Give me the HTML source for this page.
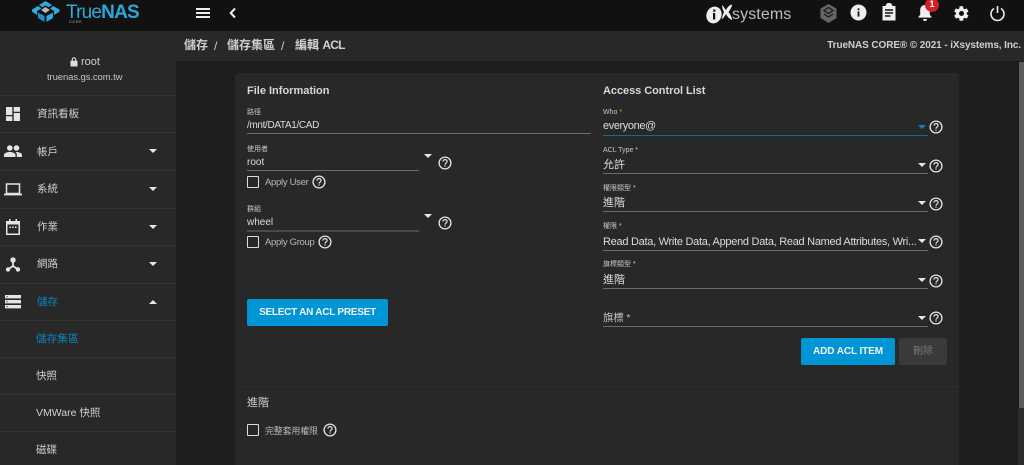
<!DOCTYPE html>
<html><head><meta charset="utf-8"><style>
*{box-sizing:border-box}
html,body{margin:0;padding:0;width:1024px;height:465px;overflow:hidden;background:#1e1e1e}
body{font-family:"Liberation Sans","Noto Sans CJK TC",sans-serif;color:#e0e0e0;position:relative}
.a{position:absolute;white-space:nowrap}
.line{position:absolute;height:1px;background:#6a6a6a}
.lab{position:absolute;font-size:7px;color:#c8c8c8;white-space:nowrap;line-height:9px}
.val{position:absolute;font-size:11px;color:#dcdcdc;white-space:nowrap;line-height:14px}
.tri{position:absolute;width:0;height:0;border-left:4.5px solid transparent;border-right:4.5px solid transparent;border-top:4.5px solid #e8e8e8}
.triu{border-top:0;border-bottom:4.5px solid #e8e8e8}
.q{position:absolute;width:14px;height:14px}
.cb{position:absolute;width:12px;height:12px;border:1.5px solid #e0e0e0;border-radius:1px}
.menu{position:absolute;left:0;width:176px;height:1px;background:#333}
.mt{position:absolute;left:37px;font-size:10.5px;color:#cfcfcf;white-space:nowrap;line-height:14px}
.ic{position:absolute}
.btn{position:absolute;background:#0095d5;color:#f2f2f2;font-weight:bold;font-size:10px;text-align:center;border-radius:2px;height:27px;line-height:28px;white-space:nowrap}
</style></head><body>
<svg width="0" height="0" style="position:absolute"><defs>
<symbol id="q" viewBox="0 0 14 14"><circle cx="7" cy="7" r="5.9" fill="none" stroke="#e6e6e6" stroke-width="1.3"/><path d="M4.9 5.6c0-1.2 1-2 2.1-2s2.1.8 2.1 1.9c0 1.5-2.1 1.6-2.1 3.1" fill="none" stroke="#e6e6e6" stroke-width="1.2"/><rect x="6.4" y="9.4" width="1.2" height="1.2" fill="#e6e6e6"/></symbol>
</defs></svg>

<!-- top bar -->
<div class="a" style="left:0;top:0;width:1024px;height:31px;background:#111"></div>
<svg class="ic" style="left:31px;top:0" width="30" height="24" viewBox="0 0 30 24">
<path d="M14.5 1 L21 5 L17.5 7.2 L14.5 5.4 L11.5 7.2 L8 5 Z" fill="#31a9de"/>
<path d="M7 6 L10.2 8.2 L10.2 8.6 L6.2 11 L6.2 15 L1 11.8 L1 9.5 Z" fill="#31a9de"/>
<path d="M22 6 L28.5 9.5 L28.5 11.8 L23 15 L23 11 L19 8.6 Z" fill="#31a9de"/>
<path d="M14.5 7 L19 10 L14.5 13 L10 10 Z" fill="#b5b5b5"/>
<path d="M7 12.5 L13.5 16 L13.5 22 L7 18 Z" fill="#1f8fc7"/>
<path d="M22 12.5 L15.5 16 L15.5 22 L22 18 Z" fill="#31a9de"/>
</svg>
<div class="a" style="left:66px;top:0;font-size:19px;line-height:25px;color:#31a9de;letter-spacing:-.8px">True<span style="font-weight:bold;color:#2ea6dc">NAS</span></div>
<div class="a" style="left:69px;top:19px;font-size:4px;line-height:5px;color:#aaa;letter-spacing:.4px">CORE</div>
<div class="a" style="left:196px;top:8px;width:14px;height:2px;background:#eee"></div>
<div class="a" style="left:196px;top:12px;width:14px;height:2px;background:#eee"></div>
<div class="a" style="left:196px;top:16px;width:14px;height:2px;background:#eee"></div>
<svg class="ic" style="left:228px;top:7px" width="10" height="12" viewBox="0 0 10 12"><path d="M7 1.5 L2.7 6 L7 10.5" fill="none" stroke="#eee" stroke-width="2"/></svg>

<svg class="ic" style="left:705px;top:3px" width="28" height="22" viewBox="0 0 28 22"><ellipse cx="9" cy="12" rx="7.5" ry="8.5" fill="#eee" transform="rotate(25 9 12)"/><rect x="8" y="10" width="2.2" height="6.500" fill="#111"/><rect x="8.200" y="6.500" width="2.200" height="2.200" fill="#111"/><path d="M17 2 C19 4 20 6 21 7 C22 5 24 2 27 1.500 C27 4 25 7 23.500 9 C25 11 27 14 27 17 C24 16 22 13 21 11 C20 13 18 15.500 16.500 16.500 C17.500 13 18 11 19 9 C18 7 17 5 17 2Z" fill="#eee"/></svg>
<div class="a" style="left:732px;top:3px;font-size:16px;line-height:24px;color:#bdbdbd;letter-spacing:.1px">systems</div>

<svg class="ic" style="left:819px;top:3px" width="19" height="21" viewBox="0 0 19 21"><path d="M9.5 1 L17.5 5.5 L17.5 15 L9.5 20 L1.5 15 L1.5 5.5 Z" fill="#666"/><path d="M9.5 4.5 L14 7.5 L9.5 10.5 L5 7.5 Z M5 11 L9.5 14 L14 11" fill="none" stroke="#222" stroke-width="1.4"/></svg>
<svg class="ic" style="left:850px;top:4px" width="17" height="17" viewBox="0 0 17 17"><circle cx="8.5" cy="8.5" r="8" fill="#eee"/><rect x="7.6" y="7.4" width="1.8" height="5.2" fill="#111"/><rect x="7.6" y="4.4" width="1.8" height="1.8" fill="#111"/></svg>
<svg class="ic" style="left:881px;top:3px" width="16" height="18" viewBox="0 0 16 18"><path d="M1.5 3h3.2a3.2 3 0 0 1 6.6 0h3.2v14.5h-13z" fill="#eee"/><path d="M4 7h8M4 10h8M4 13h5.5" stroke="#111" stroke-width="1.4"/></svg>
<svg class="ic" style="left:917px;top:4px" width="16" height="18" viewBox="0 0 16 18"><path d="M8 1c3 0 4.8 2.2 4.8 5.4v4.4l1.7 2v.8h-13v-.8l1.7-2V6.400C3.200 3.200 5 1 8 1z" fill="#eee"/><path d="M6 15h4a2 2 0 0 1-4 0z" fill="#eee"/></svg>
<div class="a" style="left:925px;top:-2px;width:14px;height:14px;border-radius:7px;background:#cf1f2a;color:#fff;font-size:9px;font-weight:bold;text-align:center;line-height:13px">1</div>
<svg class="ic" style="left:953px;top:5px" width="17" height="17" viewBox="0 0 24 24"><path fill="#eee" d="M19.400 13c.04-.32.06-.66.06-1s-.02-.68-.07-1l2.160-1.700a.5.500 0 0 0 .12-.64l-2.050-3.540a.5.500 0 0 0-.62-.22l-2.550 1.030a7.500 7.500 0 0 0-1.730-1l-.39-2.710A.5.500 0 0 0 13.830 1.800H9.740a.5.500 0 0 0-.5.420L8.850 4.930a7.800 7.800 0 0 0-1.730 1L4.570 4.900a.5.500 0 0 0-.62.22L1.900 8.660a.5.500 0 0 0 .12.64L4.180 11c-.05.32-.08.67-.08 1s.02.68.07 1l-2.160 1.700a.5.500 0 0 0-.12.64l2.050 3.540c.13.23.4.310.62.220l2.550-1.030c.54.410 1.110.750 1.730 1l.39 2.710c.04.250.25.420.5.420h4.090c.25 0 .46-.17.5-.42l.39-2.710a7.800 7.800 0 0 0 1.730-1l2.550 1.030c.23.090.49 0 .62-.22l2.050-3.540a.5.500 0 0 0-.12-.64zM12 15.500a3.500 3.500 0 1 1 0-7 3.500 3.500 0 0 1 0 7z"/></svg>
<svg class="ic" style="left:989px;top:5px" width="17" height="17" viewBox="0 0 17 17"><path d="M5 3.500a6.500 6.500 0 1 0 7 0" fill="none" stroke="#eee" stroke-width="1.600"/><path d="M8.500 1v7" stroke="#eee" stroke-width="1.600"/></svg>

<!-- sidebar -->
<div class="a" style="left:0;top:31px;width:176px;height:434px;background:#282828"></div>
<svg class="ic" style="left:70px;top:57px" width="8" height="10" viewBox="0 0 8 10"><path d="M0.500 3.800H1.700V2.600a2.300 2.300 0 0 1 4.600 0v1.200H7.500V9.500H0.500zM2.800 3.800h2.400V2.600a1.200 1.200 0 0 0-2.400 0z" fill-rule="evenodd" fill="#ddd"/></svg>
<div class="a" style="left:81px;top:55px;font-size:11px;line-height:14px;color:#d0d0d0">root</div>
<div class="a" style="left:47px;top:71px;font-size:9.500px;line-height:13px;color:#c4c4c4;letter-spacing:-.1px">truenas.gs.com.tw</div>
<div class="menu" style="top:95px"></div>
<div class="menu" style="top:132px"></div>
<div class="menu" style="top:170px"></div>
<div class="menu" style="top:208px"></div>
<div class="menu" style="top:245px"></div>
<div class="menu" style="top:283px"></div>
<div class="menu" style="top:320px"></div>
<div class="menu" style="top:357px"></div>
<div class="menu" style="top:394px"></div>
<div class="menu" style="top:431px"></div>

<svg class="ic" style="left:6px;top:107px" width="14" height="14" viewBox="0 0 14 14"><path d="M0 0h6.300v8H0zM7.700 0H14v4.800H7.700zM0 9.300h6.300V14H0zM7.700 6H14v8H7.700z" fill="#e4e4e4"/></svg>
<div class="mt" style="top:107px">資訊看板</div>
<svg class="ic" style="left:4px;top:145px" width="18" height="12" viewBox="0 0 18 12"><circle cx="5.800" cy="3" r="2.800" fill="#e4e4e4"/><circle cx="12.500" cy="3" r="2.800" fill="#e4e4e4"/><path d="M0 12V9.800C0 8 3.500 7 5.800 7s5.700 1 5.700 2.800V12zM12.800 12V9.500c0-1-.5-1.800-1.300-2.400.4-.1.800-.1 1-.1 2 0 5.500 1 5.500 2.800V12z" fill="#e4e4e4"/></svg>
<div class="mt" style="top:145px">帳戶</div>
<div class="tri" style="left:149px;top:149px"></div>
<svg class="ic" style="left:4px;top:183px" width="18" height="13" viewBox="0 0 18 13"><path d="M2.500 1h13v9.500h-13z" fill="none" stroke="#e4e4e4" stroke-width="1.500"/><rect y="10.600" width="18" height="1.800" fill="#e4e4e4"/></svg>
<div class="mt" style="top:182px">系統</div>
<div class="tri" style="left:149px;top:187px"></div>
<svg class="ic" style="left:6px;top:219px" width="14" height="16" viewBox="0 0 14 16"><path d="M3 0h1.500v2h5V0H11v2h3v14H0V2h3zM1.500 5.500v9h11v-9z" fill="#e4e4e4"/><rect x="3.500" y="7.500" width="1.500" height="1.500" fill="#e4e4e4"/><rect x="6.200" y="7.500" width="1.500" height="1.500" fill="#e4e4e4"/><rect x="9" y="7.500" width="1.500" height="1.500" fill="#e4e4e4"/></svg>
<div class="mt" style="top:220px">作業</div>
<div class="tri" style="left:149px;top:225px"></div>
<svg class="ic" style="left:6px;top:257px" width="14" height="15" viewBox="0 0 14 15"><circle cx="7" cy="3" r="2.700" fill="#e4e4e4"/><circle cx="2" cy="12.500" r="2.200" fill="#e4e4e4"/><circle cx="12" cy="12.500" r="2.200" fill="#e4e4e4"/><path d="M7 4v5M7 9L2.500 12M7 9l4.500 3" stroke="#e4e4e4" stroke-width="1.800" fill="none"/></svg>
<div class="mt" style="top:257px">網路</div>
<div class="tri" style="left:149px;top:262px"></div>
<svg class="ic" style="left:5px;top:295px" width="16" height="14" viewBox="0 0 16 14"><path d="M0 0h16v3.400H0zM0 5h16v3.400H0zM0 10h16v3.400H0z" fill="#e4e4e4"/><rect x="1.500" y="1.200" width="1.300" height="1" fill="#444"/><rect x="1.500" y="6.200" width="1.300" height="1" fill="#444"/><rect x="1.500" y="11.200" width="1.300" height="1" fill="#444"/></svg>
<div class="mt" style="top:295px;color:#0a87c2">儲存</div>
<div class="tri triu" style="left:149px;top:300px"></div>
<div class="mt" style="left:36px;top:332px;color:#0a87c2;letter-spacing:.2px">儲存集區</div>
<div class="mt" style="left:36px;top:369px">快照</div>
<div class="mt" style="left:36px;top:406px">VMWare 快照</div>
<div class="mt" style="left:36px;top:443px">磁碟</div>

<!-- breadcrumb bar -->
<div class="a" style="left:176px;top:31px;width:848px;height:30px;background:#282828"></div>
<div class="a" style="left:184px;top:37px;font-size:12px;line-height:17px;font-weight:bold;color:#cfcfcf">儲存</div>
<div class="a" style="left:214px;top:38px;font-size:12px;line-height:17px;color:#cfcfcf">/</div>
<div class="a" style="left:227px;top:37px;font-size:12px;line-height:17px;font-weight:bold;color:#cfcfcf">儲存集區</div>
<div class="a" style="left:281px;top:38px;font-size:12px;line-height:17px;color:#cfcfcf">/</div>
<div class="a" style="left:295px;top:37px;font-size:12px;line-height:17px;font-weight:bold;color:#cfcfcf">編輯 <span style="letter-spacing:-.8px">ACL</span></div>
<div class="a" style="right:3px;top:38px;font-size:10px;line-height:15px;font-weight:bold;color:#cfcfcf;letter-spacing:-.1px">TrueNAS CORE® © 2021 - iXsystems, Inc.</div>

<!-- scrollbar -->
<div class="a" style="left:1019px;top:62px;width:5px;height:346px;background:#5c5c5c"></div>
<div class="a" style="left:1018px;top:408px;width:6px;height:57px;background:#2c2c2c"></div>

<!-- card -->
<div class="a" style="left:235px;top:73px;width:724px;height:392px;background:#282828;border-radius:4px 4px 0 0"></div>
<div class="a" style="left:235px;top:386px;width:724px;height:1px;background:#2f2f2f"></div>

<div class="a" style="left:247px;top:84px;font-size:11px;line-height:15px;font-weight:bold;color:#d8d8d8">File Information</div>
<div class="lab" style="left:247px;top:108px">路徑</div>
<div class="val" style="left:247px;top:119px;font-size:10px;letter-spacing:-.35px">/mnt/DATA1/CAD</div>
<div class="line" style="left:247px;top:133px;width:344px"></div>

<div class="lab" style="left:247px;top:145px">使用者</div>
<div class="val" style="left:247px;top:156px;font-size:10px">root</div>
<div class="line" style="left:247px;top:170px;width:172px"></div>
<div class="tri" style="left:424px;top:154px"></div>
<svg class="q" style="left:438px;top:156px"><use href="#q"/></svg>
<div class="cb" style="left:247px;top:176px"></div>
<div class="a" style="left:265px;top:176px;font-size:9.500px;line-height:14px;color:#b8b8b8;letter-spacing:-.3px">Apply User</div>
<svg class="q" style="left:312px;top:175px"><use href="#q"/></svg>

<div class="lab" style="left:247px;top:205px">群組</div>
<div class="val" style="left:247px;top:216px;font-size:10px">wheel</div>
<div class="line" style="left:247px;top:230px;width:172px;height:2px;background:#4a4a4a"></div>
<div class="tri" style="left:424px;top:214px"></div>
<svg class="q" style="left:438px;top:216px"><use href="#q"/></svg>
<div class="cb" style="left:247px;top:236px"></div>
<div class="a" style="left:265px;top:236px;font-size:9.500px;line-height:14px;color:#b8b8b8;letter-spacing:-.3px">Apply Group</div>
<svg class="q" style="left:318px;top:235px"><use href="#q"/></svg>

<div class="btn" style="left:247px;top:299px;width:141px;letter-spacing:-.25px">SELECT AN ACL PRESET</div>

<div class="a" style="left:247px;top:396px;font-size:11px;line-height:15px;color:#cfcfcf">進階</div>
<div class="cb" style="left:247px;top:424px"></div>
<div class="a" style="left:265px;top:424px;font-size:9px;line-height:14px;color:#b8b8b8;letter-spacing:-.2px">完整套用權限</div>
<svg class="q" style="left:323px;top:423px"><use href="#q"/></svg>

<div class="a" style="left:603px;top:84px;font-size:11px;line-height:15px;font-weight:bold;color:#d8d8d8;letter-spacing:-.05px">Access Control List</div>

<div class="lab" style="left:603px;top:108px">Who <span style="color:#d9a400">*</span></div>
<div class="val" style="left:603px;top:119px;font-size:11px;letter-spacing:-.4px">everyone@</div>
<div class="line" style="left:603px;top:135px;width:325px;background:#0a6d9c"></div>
<div class="tri" style="left:918px;top:125px;border-top-color:#0a87c2"></div>
<svg class="q" style="left:929px;top:120px"><use href="#q"/></svg>

<div class="lab" style="left:603px;top:146px">ACL Type *</div>
<div class="val" style="left:603px;top:158px;font-size:11px">允許</div>
<div class="line" style="left:603px;top:173px;width:325px"></div>
<div class="tri" style="left:918px;top:163px"></div>
<svg class="q" style="left:929px;top:159px"><use href="#q"/></svg>

<div class="lab" style="left:603px;top:184px">權限類型 *</div>
<div class="val" style="left:603px;top:196px;font-size:11px">進階</div>
<div class="line" style="left:603px;top:211px;width:325px"></div>
<div class="tri" style="left:918px;top:201px"></div>
<svg class="q" style="left:929px;top:197px"><use href="#q"/></svg>

<div class="lab" style="left:603px;top:222px">權限 *</div>
<div class="val" style="left:603px;top:235px;font-size:11px;letter-spacing:-.28px">Read Data, Write Data, Append Data, Read Named Attributes, Wri...</div>
<div class="line" style="left:603px;top:250px;width:325px"></div>
<div class="tri" style="left:918px;top:239px"></div>
<svg class="q" style="left:929px;top:235px"><use href="#q"/></svg>

<div class="lab" style="left:603px;top:260px">旗標類型 *</div>
<div class="val" style="left:603px;top:273px;font-size:11px">進階</div>
<div class="line" style="left:603px;top:288px;width:325px"></div>
<div class="tri" style="left:918px;top:278px"></div>
<svg class="q" style="left:929px;top:274px"><use href="#q"/></svg>

<div class="val" style="left:603px;top:311px;font-size:10.500px;color:#c0c0c0;letter-spacing:-.2px">旗標 *</div>
<div class="line" style="left:603px;top:326px;width:325px"></div>
<div class="tri" style="left:918px;top:316px"></div>
<svg class="q" style="left:929px;top:311px"><use href="#q"/></svg>

<div class="btn" style="left:801px;top:338px;width:94px;letter-spacing:-.1px">ADD ACL ITEM</div>
<div class="btn" style="left:899px;top:338px;width:48px;background:#3a3a3a;color:#777;font-weight:normal">刪除</div>
</body></html>
